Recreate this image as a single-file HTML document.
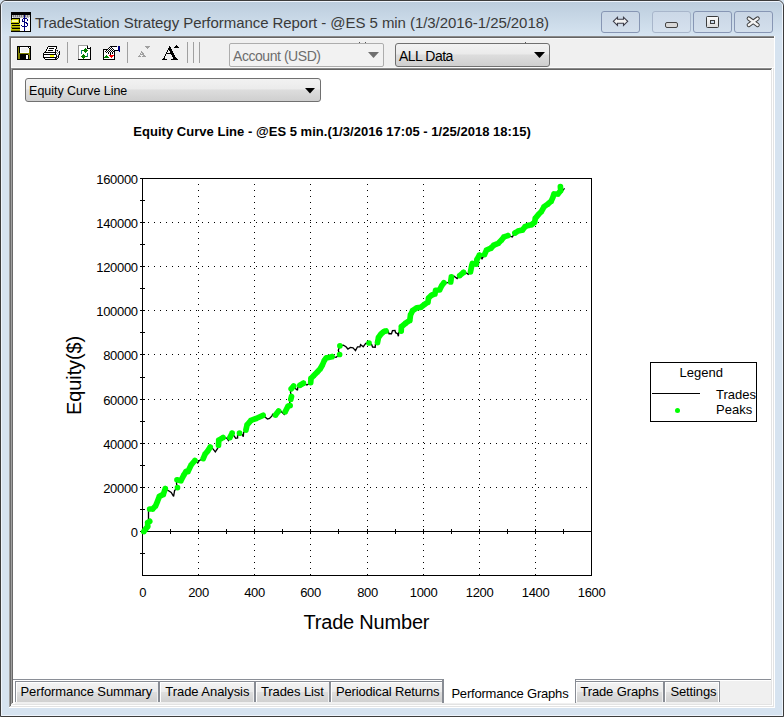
<!DOCTYPE html>
<html><head><meta charset="utf-8">
<style>
*{box-sizing:border-box}
html,body{margin:0;padding:0}
body{width:784px;height:717px;overflow:hidden;position:relative;background:#d6e3f0;font-family:"Liberation Sans",sans-serif}
.a{position:absolute}
.t{position:absolute;white-space:nowrap;line-height:1}
</style></head><body>
<!-- outer frame -->
<div class="a" style="left:0;top:0;width:784px;height:717px;border:1px solid #3c3c3c;border-radius:6px 6px 0 0"></div>
<div class="a" style="left:1px;top:1px;width:782px;height:715px;border:1px solid #eef4fc;border-radius:5px 5px 0 0"></div>
<div class="a" style="left:2px;top:2px;width:780px;height:34px;background:linear-gradient(#bccddd,#d6e4f1);border-radius:4px 4px 0 0"></div>
<!-- app icon -->
<svg class="a" style="left:11px;top:12px" width="20" height="20" shape-rendering="crispEdges"><path d="M0 0h20v1h-20zM0 1h20v1h-20zM0 2h20v1h-20zM0 3h1v1h-1zM19 3h1v1h-1zM0 4h1v1h-1zM19 4h1v1h-1zM0 5h1v1h-1zM19 5h1v1h-1zM0 6h9v1h-9zM19 6h1v1h-1zM0 7h1v1h-1zM8 7h1v1h-1zM19 7h1v1h-1zM8 8h1v1h-1zM19 8h1v1h-1zM8 9h1v1h-1zM19 9h1v1h-1zM8 10h1v1h-1zM19 10h1v1h-1zM0 11h8v1h-8zM19 11h1v1h-1zM19 12h1v1h-1zM1 13h8v1h-8zM19 13h1v1h-1zM19 14h1v1h-1zM19 15h1v1h-1zM1 16h8v1h-8zM19 16h1v1h-1zM19 17h1v1h-1zM19 18h1v1h-1zM0 19h20v1h-20z" fill="#000"/><path d="M1 3h1v1h-1zM3 3h1v1h-1zM5 3h1v1h-1zM7 3h1v1h-1zM9 3h1v1h-1zM11 3h1v1h-1zM15 3h1v1h-1zM17 3h2v1h-2zM1 4h1v1h-1zM3 4h1v1h-1zM5 4h1v1h-1zM7 4h1v1h-1zM9 4h1v1h-1zM11 4h1v1h-1zM15 4h1v1h-1zM17 4h2v1h-2zM2 5h11v1h-11zM14 5h4v1h-4z" fill="#c0c0c0"/><path d="M2 3h1v1h-1zM4 3h1v1h-1zM6 3h1v1h-1zM8 3h1v1h-1zM10 3h1v1h-1zM12 3h1v1h-1zM14 3h1v1h-1zM16 3h1v1h-1zM2 4h1v1h-1zM4 4h1v1h-1zM6 4h1v1h-1zM8 4h1v1h-1zM10 4h1v1h-1zM12 4h1v1h-1zM14 4h1v1h-1zM16 4h1v1h-1z" fill="#808080"/><path d="M13 3h1v1h-1zM13 4h1v1h-1zM13 5h1v1h-1zM12 6h4v1h-4zM11 7h1v1h-1zM13 7h1v1h-1zM16 7h1v1h-1zM11 8h1v1h-1zM13 8h1v1h-1zM16 8h1v1h-1zM11 9h3v1h-3zM13 10h3v1h-3zM13 11h1v1h-1zM15 11h2v1h-2zM13 12h1v1h-1zM16 12h1v1h-1zM10 13h1v1h-1zM13 13h1v1h-1zM16 13h1v1h-1zM11 14h5v1h-5zM13 15h1v1h-1zM13 16h1v1h-1zM13 17h1v1h-1zM13 18h1v1h-1z" fill="#000080"/><path d="M1 5h1v1h-1zM18 5h1v1h-1zM9 6h3v1h-3zM16 6h3v1h-3zM9 7h2v1h-2zM12 7h1v1h-1zM14 7h2v1h-2zM17 7h2v1h-2zM9 8h2v1h-2zM12 8h1v1h-1zM14 8h2v1h-2zM17 8h2v1h-2zM9 9h2v1h-2zM14 9h5v1h-5zM9 10h4v1h-4zM16 10h3v1h-3zM9 11h4v1h-4zM14 11h1v1h-1zM17 11h2v1h-2zM9 12h4v1h-4zM14 12h2v1h-2zM17 12h2v1h-2zM9 13h1v1h-1zM11 13h2v1h-2zM14 13h2v1h-2zM17 13h2v1h-2zM9 14h2v1h-2zM16 14h3v1h-3zM9 15h4v1h-4zM14 15h5v1h-5zM9 16h4v1h-4zM14 16h5v1h-5zM9 17h4v1h-4zM14 17h5v1h-5zM9 18h4v1h-4zM14 18h5v1h-5z" fill="#fff"/><path d="M1 7h7v1h-7zM0 8h1v1h-1zM7 8h1v1h-1zM0 9h1v1h-1zM7 9h1v1h-1zM0 10h8v1h-8zM8 11h1v1h-1zM0 12h9v1h-9zM0 13h1v1h-1zM0 14h9v1h-9zM0 16h1v1h-1zM0 17h9v1h-9z" fill="#c8c800"/><path d="M1 8h6v1h-6zM1 9h6v1h-6z" fill="#ffffa0"/><path d="M0 15h9v1h-9zM0 18h9v1h-9z" fill="#808000"/></svg>
<div class="t" style="left:35px;top:15px;font-size:15px;color:#3a3a3a;letter-spacing:-.06px">TradeStation Strategy Performance Report - @ES 5 min (1/3/2016-1/25/2018)</div>
<!-- caption buttons -->
<div class="a" style="left:601px;top:11px;width:39px;height:22px;border:1px solid #8796b4;border-radius:3px;background:linear-gradient(#c9d6e5,#d3dfec)"></div>
<div class="a" style="left:652px;top:11px;width:39px;height:22px;border:1px solid #a8b6cb;border-radius:3px;background:linear-gradient(#cbd8e7,#d5e1ee)"></div>
<div class="a" style="left:693px;top:11px;width:39px;height:22px;border:1px solid #8796b4;border-radius:3px;background:linear-gradient(#c9d6e5,#d3dfec)"></div>
<div class="a" style="left:734px;top:11px;width:39px;height:22px;border:1px solid #8796b4;border-radius:3px;background:linear-gradient(#c9d6e5,#d3dfec)"></div>
<svg class="a" style="left:608px;top:12px" width="26" height="18" viewBox="0 0 26 18"><path d="M5.3 9.3L9.5 5.2V7.3H15.5V5.2L19.7 9.3L15.5 13.4V11.3H9.5V13.4Z" fill="#f2f2f2" stroke="#3c3c48" stroke-width="1.1" stroke-linejoin="miter"/></svg>
<div class="a" style="left:665px;top:22px;width:13px;height:6px;border:1px solid #444;border-radius:2px;background:#d8d8d8"></div>
<div class="a" style="left:706px;top:16px;width:13px;height:12px;border:1.4px solid #3c3c3c;border-radius:1.5px;background:linear-gradient(#fafafa,#dcdcdc)"></div>
<div class="a" style="left:710px;top:19.7px;width:5px;height:4px;border:1.2px solid #3c3c3c;background:#c8d8e8"></div>
<svg class="a" style="left:745px;top:15px" width="17" height="14" viewBox="0 0 17 14"><path d="M3.8 3.6L12.6 10M12.6 3.6L3.8 10" stroke="#3c3c3c" stroke-width="4.3" stroke-linecap="round"/><path d="M3.8 3.6L12.6 10M12.6 3.6L3.8 10" stroke="#f4f4f4" stroke-width="2.4" stroke-linecap="round"/></svg>
<!-- inner frame -->
<div class="a" style="left:9px;top:36px;width:766px;height:672px;background:#f0f0f0"></div>
<div class="a" style="left:9px;top:36px;width:766px;height:1px;background:#8a8a8a"></div>
<div class="a" style="left:9px;top:37px;width:765px;height:1px;background:#646464"></div>
<div class="a" style="left:9px;top:36px;width:1px;height:671px;background:#a0a0a0"></div>
<div class="a" style="left:10px;top:37px;width:1px;height:669px;background:#6a6a6a"></div>
<div class="a" style="left:11px;top:38px;width:763px;height:1px;background:#fafafa"></div>
<div class="a" style="left:11px;top:38px;width:1px;height:30px;background:#fafafa"></div>
<div class="a" style="left:774px;top:36px;width:1px;height:672px;background:#fff"></div>
<!-- toolbar icons -->
<svg class="a" style="left:17px;top:46px" width="14" height="14" shape-rendering="crispEdges"><path d="M0 0h14v1h-14zM0 1h1v1h-1zM2 1h1v1h-1zM11 1h1v1h-1zM13 1h1v1h-1zM0 2h1v1h-1zM2 2h1v1h-1zM12 2h2v1h-2zM0 3h1v1h-1zM2 3h1v1h-1zM13 3h1v1h-1zM0 4h1v1h-1zM2 4h1v1h-1zM13 4h1v1h-1zM0 5h1v1h-1zM2 5h1v1h-1zM13 5h1v1h-1zM0 6h1v1h-1zM2 6h1v1h-1zM13 6h1v1h-1zM0 7h1v1h-1zM13 7h1v1h-1zM0 8h1v1h-1zM3 8h8v1h-8zM13 8h1v1h-1zM0 9h1v1h-1zM3 9h6v1h-6zM11 9h1v1h-1zM13 9h1v1h-1zM0 10h1v1h-1zM3 10h6v1h-6zM11 10h1v1h-1zM13 10h1v1h-1zM0 11h1v1h-1zM3 11h6v1h-6zM11 11h1v1h-1zM13 11h1v1h-1zM0 12h1v1h-1zM3 12h6v1h-6zM11 12h1v1h-1zM13 12h1v1h-1zM0 13h14v1h-14z" fill="#000"/><path d="M1 1h1v1h-1zM1 2h1v1h-1zM1 3h1v1h-1zM12 3h1v1h-1zM1 4h1v1h-1zM12 4h1v1h-1zM1 5h1v1h-1zM12 5h1v1h-1zM1 6h1v1h-1zM12 6h1v1h-1zM1 7h12v1h-12zM1 8h2v1h-2zM11 8h2v1h-2zM1 9h2v1h-2zM12 9h1v1h-1zM1 10h2v1h-2zM12 10h1v1h-1zM1 11h2v1h-2zM12 11h1v1h-1zM1 12h2v1h-2zM12 12h1v1h-1z" fill="#808000"/><path d="M3 1h8v1h-8zM12 1h1v1h-1zM3 2h1v1h-1zM11 2h1v1h-1zM3 3h1v1h-1zM11 3h1v1h-1zM3 4h1v1h-1zM11 4h1v1h-1zM3 5h1v1h-1zM11 5h1v1h-1zM3 6h9v1h-9zM9 9h2v1h-2zM9 10h2v1h-2zM9 11h2v1h-2zM9 12h2v1h-2z" fill="#fff"/><path d="M4 2h7v1h-7zM4 3h7v1h-7zM4 4h7v1h-7zM4 5h7v1h-7z" fill="#f0f0f0"/></svg>
<svg class="a" style="left:43px;top:46px" width="17" height="14" shape-rendering="crispEdges"><path d="M5 0h9v1h-9zM4 1h1v1h-1zM13 1h1v1h-1zM4 2h1v1h-1zM6 2h5v1h-5zM13 2h1v1h-1zM3 3h1v1h-1zM12 3h1v1h-1zM3 4h1v1h-1zM5 4h5v1h-5zM12 4h1v1h-1zM14 4h1v1h-1zM2 5h1v1h-1zM12 5h1v1h-1zM16 5h1v1h-1zM1 6h12v1h-12zM16 6h1v1h-1zM0 7h1v1h-1zM12 7h1v1h-1zM16 7h1v1h-1zM0 8h13v1h-13zM16 8h1v1h-1zM0 9h1v1h-1zM13 9h1v1h-1zM15 9h1v1h-1zM0 10h1v1h-1zM13 10h1v1h-1zM15 10h1v1h-1zM0 11h14v1h-14zM15 11h1v1h-1zM1 12h1v1h-1zM12 12h1v1h-1zM14 12h1v1h-1zM2 13h12v1h-12z" fill="#000"/><path d="M5 1h8v1h-8zM5 2h1v1h-1zM11 2h2v1h-2zM4 3h8v1h-8zM4 4h1v1h-1zM10 4h2v1h-2zM3 5h9v1h-9zM13 5h1v1h-1zM15 5h1v1h-1zM14 6h1v1h-1zM1 7h11v1h-11zM13 7h1v1h-1zM15 7h1v1h-1zM14 8h1v1h-1zM1 9h6v1h-6zM11 9h2v1h-2zM14 9h1v1h-1zM1 10h6v1h-6zM11 10h2v1h-2zM14 11h1v1h-1zM2 12h10v1h-10z" fill="#fff"/><path d="M13 4h1v1h-1zM14 5h1v1h-1zM13 6h1v1h-1zM15 6h1v1h-1zM14 7h1v1h-1zM13 8h1v1h-1zM15 8h1v1h-1zM14 10h1v1h-1zM13 12h1v1h-1z" fill="#808080"/><path d="M7 9h4v1h-4zM7 10h4v1h-4z" fill="#ffff00"/></svg>
<div class="a" style="left:67px;top:42px;width:1px;height:21px;background:#a0a0a0"></div>
<svg class="a" style="left:78px;top:45px" width="13" height="15" shape-rendering="crispEdges"><path d="M0 0h9v1h-9zM0 1h1v1h-1zM0 2h1v1h-1zM0 3h1v1h-1zM0 4h1v1h-1zM0 5h1v1h-1zM0 6h1v1h-1zM0 7h1v1h-1zM0 8h1v1h-1zM0 9h1v1h-1zM0 10h1v1h-1zM0 11h1v1h-1zM0 12h1v1h-1zM0 13h1v1h-1z" fill="#a0a0a0"/><path d="M9 0h1v1h-1z" fill="#808080"/><path d="M10 0h1v1h-1zM1 1h8v1h-8zM10 1h2v1h-2zM1 2h8v1h-8zM10 2h2v1h-2zM1 3h6v1h-6zM8 3h1v1h-1zM1 4h5v1h-5zM9 4h3v1h-3zM1 5h2v1h-2zM10 5h2v1h-2zM1 6h2v1h-2zM4 6h2v1h-2zM9 6h3v1h-3zM1 7h2v1h-2zM4 7h3v1h-3zM8 7h4v1h-4zM1 8h2v1h-2zM4 8h5v1h-5zM10 8h2v1h-2zM1 9h4v1h-4zM6 9h3v1h-3zM10 9h2v1h-2zM1 10h3v1h-3zM7 10h2v1h-2zM10 10h2v1h-2zM1 11h2v1h-2zM10 11h2v1h-2zM1 12h3v1h-3zM7 12h5v1h-5zM1 13h4v1h-4zM6 13h6v1h-6z" fill="#fff"/><path d="M9 1h1v1h-1zM9 2h1v1h-1zM12 2h1v1h-1zM9 3h4v1h-4zM12 4h1v1h-1zM12 5h1v1h-1zM12 6h1v1h-1zM12 7h1v1h-1zM12 8h1v1h-1zM12 9h1v1h-1zM12 10h1v1h-1zM12 11h1v1h-1zM12 12h1v1h-1zM12 13h1v1h-1zM0 14h13v1h-13z" fill="#000"/><path d="M7 3h1v1h-1zM6 4h3v1h-3zM4 5h6v1h-6zM6 6h3v1h-3zM7 7h1v1h-1zM5 9h1v1h-1zM4 10h3v1h-3zM3 11h6v1h-6zM4 12h3v1h-3zM5 13h1v1h-1z" fill="#008000"/><path d="M3 5h1v1h-1zM3 6h1v1h-1zM3 7h1v1h-1zM3 8h1v1h-1zM9 8h1v1h-1zM9 9h1v1h-1zM9 10h1v1h-1zM9 11h1v1h-1z" fill="#108080"/></svg>
<svg class="a" style="left:102px;top:45px" width="18" height="15" shape-rendering="crispEdges"><path d="M8 1h7v1h-7zM7 2h1v1h-1zM9 2h1v1h-1zM6 3h1v1h-1zM8 3h1v1h-1zM10 3h1v1h-1zM1 4h5v1h-5zM7 4h1v1h-1zM9 4h1v1h-1zM11 4h1v1h-1zM1 5h1v1h-1zM4 5h1v1h-1zM6 5h1v1h-1zM8 5h1v1h-1zM10 5h1v1h-1zM12 5h4v1h-4zM1 6h1v1h-1zM3 6h1v1h-1zM5 6h1v1h-1zM7 6h1v1h-1zM9 6h1v1h-1zM11 6h2v1h-2zM1 7h1v1h-1zM4 7h1v1h-1zM6 7h1v1h-1zM8 7h1v1h-1zM10 7h1v1h-1zM12 7h1v1h-1zM1 8h1v1h-1zM6 8h1v1h-1zM8 8h1v1h-1zM10 8h1v1h-1zM12 8h1v1h-1zM1 9h1v1h-1zM8 9h1v1h-1zM12 9h1v1h-1zM1 10h1v1h-1zM12 10h1v1h-1zM1 11h1v1h-1zM12 11h1v1h-1zM1 12h1v1h-1zM12 12h1v1h-1zM1 13h1v1h-1zM12 13h1v1h-1zM1 14h12v1h-12z" fill="#000"/><path d="M16 1h2v1h-2zM16 2h2v1h-2zM16 3h2v1h-2zM16 4h2v1h-2zM16 5h2v1h-2zM17 6h1v1h-1z" fill="#000080"/><path d="M8 2h1v1h-1zM10 2h6v1h-6zM7 3h1v1h-1zM9 3h1v1h-1zM11 3h5v1h-5zM6 4h1v1h-1zM8 4h1v1h-1zM10 4h1v1h-1zM12 4h4v1h-4zM2 5h2v1h-2zM5 5h1v1h-1zM7 5h1v1h-1zM9 5h1v1h-1zM11 5h1v1h-1zM2 6h1v1h-1zM4 6h1v1h-1zM6 6h1v1h-1zM8 6h1v1h-1zM10 6h1v1h-1zM2 7h2v1h-2zM5 7h1v1h-1zM7 7h1v1h-1zM9 7h1v1h-1zM11 7h1v1h-1zM2 8h4v1h-4zM7 8h1v1h-1zM9 8h1v1h-1zM11 8h1v1h-1zM2 9h6v1h-6zM9 9h3v1h-3zM2 10h2v1h-2zM5 10h2v1h-2zM2 11h1v1h-1zM6 11h2v1h-2zM11 11h1v1h-1zM7 12h2v1h-2zM10 12h2v1h-2zM2 13h10v1h-10z" fill="#fff"/><path d="M4 10h1v1h-1zM3 11h3v1h-3zM2 12h5v1h-5z" fill="#008000"/><path d="M7 10h5v1h-5zM8 11h3v1h-3zM9 12h1v1h-1z" fill="#ff0000"/></svg>
<div class="a" style="left:127px;top:42px;width:1px;height:21px;background:#a0a0a0"></div>
<svg class="a" style="left:138px;top:46px" width="12" height="11" shape-rendering="crispEdges"><path d="M7 0h5v1h-5zM8 1h3v1h-3zM9 2h1v1h-1zM3 5h1v1h-1zM3 6h2v1h-2zM2 7h1v1h-1zM4 7h2v1h-2zM2 8h4v1h-4zM1 9h1v1h-1zM5 9h2v1h-2zM0 10h3v1h-3zM4 10h4v1h-4z" fill="#a0a0a0"/></svg>
<svg class="a" style="left:162px;top:45px" width="18" height="15" shape-rendering="crispEdges"><path d="M14 0h1v1h-1zM7 1h1v1h-1zM13 1h3v1h-3zM7 2h2v1h-2zM12 2h5v1h-5zM6 3h3v1h-3zM6 4h4v1h-4zM5 5h1v1h-1zM7 5h3v1h-3zM5 6h1v1h-1zM8 6h3v1h-3zM4 7h1v1h-1zM8 7h3v1h-3zM4 8h8v1h-8zM3 9h1v1h-1zM9 9h3v1h-3zM3 10h1v1h-1zM10 10h3v1h-3zM2 11h1v1h-1zM10 11h3v1h-3zM2 12h1v1h-1zM11 12h3v1h-3zM1 13h2v1h-2zM11 13h4v1h-4zM0 14h5v1h-5zM9 14h7v1h-7z" fill="#000"/></svg>
<div class="a" style="left:187px;top:42px;width:1px;height:21px;background:#a0a0a0"></div>
<div class="a" style="left:193px;top:42px;width:1px;height:21px;background:#a0a0a0"></div>
<div class="a" style="left:199px;top:42px;width:1px;height:21px;background:#a0a0a0"></div>
<!-- account dropdown -->
<div class="a" style="left:359px;top:42px;width:1px;height:1px;background:#555"></div>
<div class="a" style="left:365px;top:42px;width:1px;height:1px;background:#555"></div>
<div class="a" style="left:525px;top:42px;width:1px;height:1px;background:#555"></div>
<div class="a" style="left:229px;top:43px;width:155px;height:24px;border:1px solid #adadad;border-radius:2px;background:#f2f2f2"></div>
<div class="t" style="left:233px;top:48.5px;font-size:14px;color:#6d6d6d;letter-spacing:-.45px">Account (USD)</div>
<svg class="a" style="left:368px;top:52px" width="11" height="6"><path d="M0 0h11l-5.5 6z" fill="#707070"/></svg>
<div class="a" style="left:395px;top:43px;width:155px;height:24px;border:1px solid #707070;border-radius:3px;background:linear-gradient(#f2f2f2 0,#ebebeb 45%,#dddddd 50%,#cfcfcf 100%)"></div>
<div class="t" style="left:399px;top:48.5px;font-size:14px;color:#000;letter-spacing:-.5px">ALL Data</div>
<svg class="a" style="left:534px;top:52px" width="11" height="6"><path d="M0 0h11l-5.5 6z" fill="#000"/></svg>
<!-- content area -->
<div class="a" style="left:11px;top:67px;width:763px;height:1px;background:#fafafa"></div>
<div class="a" style="left:11px;top:68px;width:761px;height:1px;background:#8a8a8a"></div>
<div class="a" style="left:12px;top:69px;width:759px;height:1px;background:#646464"></div>
<div class="a" style="left:11px;top:68px;width:1px;height:636px;background:#a0a0a0"></div>
<div class="a" style="left:12px;top:69px;width:1px;height:634px;background:#696969"></div>
<div class="a" style="left:13px;top:70px;width:758px;height:609px;background:#fff"></div>
<div class="a" style="left:771px;top:69px;width:1px;height:636px;background:#e3e3e3"></div>
<div class="a" style="left:772px;top:68px;width:1px;height:638px;background:#fff"></div>
<div class="a" style="left:773px;top:68px;width:1px;height:639px;background:#e3e3e3"></div>
<!-- equity dropdown -->
<div class="a" style="left:25px;top:78px;width:296px;height:24px;border:1px solid #707070;border-radius:3px;background:linear-gradient(#f2f2f2 0,#ebebeb 45%,#dddddd 50%,#cfcfcf 100%)"></div>
<div class="t" style="left:29.1px;top:85px;font-size:12.45px;color:#000">Equity Curve Line</div>
<svg class="a" style="left:305px;top:88px" width="11" height="6"><path d="M0 0h10l-5 5.5z" fill="#000"/></svg>
<!-- chart title -->
<div class="t" style="left:133.3px;top:125.3px;font-size:13px;font-weight:bold;letter-spacing:.03px;color:#000">Equity Curve Line - @ES 5 min.(1/3/2016 17:05 - 1/25/2018 18:15)</div>
<!-- axis titles -->
<div class="t" style="left:303.5px;top:612px;font-size:20px;color:#000;letter-spacing:-.2px">Trade Number</div>
<div class="t" style="left:64px;top:415px;font-size:20px;color:#000;letter-spacing:-.1px;transform:rotate(-90deg);transform-origin:0 0">Equity($)</div>
<svg width="784" height="717" style="position:absolute;left:0;top:0" shape-rendering="crispEdges">
<path d="M148 222h1v1h-1zM154 222h1v1h-1zM160 222h1v1h-1zM166 222h1v1h-1zM172 222h1v1h-1zM178 222h1v1h-1zM184 222h1v1h-1zM190 222h1v1h-1zM196 222h1v1h-1zM202 222h1v1h-1zM208 222h1v1h-1zM214 222h1v1h-1zM220 222h1v1h-1zM226 222h1v1h-1zM232 222h1v1h-1zM238 222h1v1h-1zM244 222h1v1h-1zM250 222h1v1h-1zM256 222h1v1h-1zM262 222h1v1h-1zM268 222h1v1h-1zM274 222h1v1h-1zM280 222h1v1h-1zM286 222h1v1h-1zM292 222h1v1h-1zM298 222h1v1h-1zM304 222h1v1h-1zM310 222h1v1h-1zM316 222h1v1h-1zM322 222h1v1h-1zM328 222h1v1h-1zM334 222h1v1h-1zM340 222h1v1h-1zM346 222h1v1h-1zM352 222h1v1h-1zM358 222h1v1h-1zM364 222h1v1h-1zM370 222h1v1h-1zM376 222h1v1h-1zM382 222h1v1h-1zM388 222h1v1h-1zM394 222h1v1h-1zM400 222h1v1h-1zM406 222h1v1h-1zM412 222h1v1h-1zM418 222h1v1h-1zM424 222h1v1h-1zM430 222h1v1h-1zM436 222h1v1h-1zM442 222h1v1h-1zM448 222h1v1h-1zM454 222h1v1h-1zM460 222h1v1h-1zM466 222h1v1h-1zM472 222h1v1h-1zM478 222h1v1h-1zM484 222h1v1h-1zM490 222h1v1h-1zM496 222h1v1h-1zM502 222h1v1h-1zM508 222h1v1h-1zM514 222h1v1h-1zM520 222h1v1h-1zM526 222h1v1h-1zM532 222h1v1h-1zM538 222h1v1h-1zM544 222h1v1h-1zM550 222h1v1h-1zM556 222h1v1h-1zM562 222h1v1h-1zM568 222h1v1h-1zM574 222h1v1h-1zM580 222h1v1h-1zM586 222h1v1h-1zM148 266h1v1h-1zM154 266h1v1h-1zM160 266h1v1h-1zM166 266h1v1h-1zM172 266h1v1h-1zM178 266h1v1h-1zM184 266h1v1h-1zM190 266h1v1h-1zM196 266h1v1h-1zM202 266h1v1h-1zM208 266h1v1h-1zM214 266h1v1h-1zM220 266h1v1h-1zM226 266h1v1h-1zM232 266h1v1h-1zM238 266h1v1h-1zM244 266h1v1h-1zM250 266h1v1h-1zM256 266h1v1h-1zM262 266h1v1h-1zM268 266h1v1h-1zM274 266h1v1h-1zM280 266h1v1h-1zM286 266h1v1h-1zM292 266h1v1h-1zM298 266h1v1h-1zM304 266h1v1h-1zM310 266h1v1h-1zM316 266h1v1h-1zM322 266h1v1h-1zM328 266h1v1h-1zM334 266h1v1h-1zM340 266h1v1h-1zM346 266h1v1h-1zM352 266h1v1h-1zM358 266h1v1h-1zM364 266h1v1h-1zM370 266h1v1h-1zM376 266h1v1h-1zM382 266h1v1h-1zM388 266h1v1h-1zM394 266h1v1h-1zM400 266h1v1h-1zM406 266h1v1h-1zM412 266h1v1h-1zM418 266h1v1h-1zM424 266h1v1h-1zM430 266h1v1h-1zM436 266h1v1h-1zM442 266h1v1h-1zM448 266h1v1h-1zM454 266h1v1h-1zM460 266h1v1h-1zM466 266h1v1h-1zM472 266h1v1h-1zM478 266h1v1h-1zM484 266h1v1h-1zM490 266h1v1h-1zM496 266h1v1h-1zM502 266h1v1h-1zM508 266h1v1h-1zM514 266h1v1h-1zM520 266h1v1h-1zM526 266h1v1h-1zM532 266h1v1h-1zM538 266h1v1h-1zM544 266h1v1h-1zM550 266h1v1h-1zM556 266h1v1h-1zM562 266h1v1h-1zM568 266h1v1h-1zM574 266h1v1h-1zM580 266h1v1h-1zM586 266h1v1h-1zM148 310h1v1h-1zM154 310h1v1h-1zM160 310h1v1h-1zM166 310h1v1h-1zM172 310h1v1h-1zM178 310h1v1h-1zM184 310h1v1h-1zM190 310h1v1h-1zM196 310h1v1h-1zM202 310h1v1h-1zM208 310h1v1h-1zM214 310h1v1h-1zM220 310h1v1h-1zM226 310h1v1h-1zM232 310h1v1h-1zM238 310h1v1h-1zM244 310h1v1h-1zM250 310h1v1h-1zM256 310h1v1h-1zM262 310h1v1h-1zM268 310h1v1h-1zM274 310h1v1h-1zM280 310h1v1h-1zM286 310h1v1h-1zM292 310h1v1h-1zM298 310h1v1h-1zM304 310h1v1h-1zM310 310h1v1h-1zM316 310h1v1h-1zM322 310h1v1h-1zM328 310h1v1h-1zM334 310h1v1h-1zM340 310h1v1h-1zM346 310h1v1h-1zM352 310h1v1h-1zM358 310h1v1h-1zM364 310h1v1h-1zM370 310h1v1h-1zM376 310h1v1h-1zM382 310h1v1h-1zM388 310h1v1h-1zM394 310h1v1h-1zM400 310h1v1h-1zM406 310h1v1h-1zM412 310h1v1h-1zM418 310h1v1h-1zM424 310h1v1h-1zM430 310h1v1h-1zM436 310h1v1h-1zM442 310h1v1h-1zM448 310h1v1h-1zM454 310h1v1h-1zM460 310h1v1h-1zM466 310h1v1h-1zM472 310h1v1h-1zM478 310h1v1h-1zM484 310h1v1h-1zM490 310h1v1h-1zM496 310h1v1h-1zM502 310h1v1h-1zM508 310h1v1h-1zM514 310h1v1h-1zM520 310h1v1h-1zM526 310h1v1h-1zM532 310h1v1h-1zM538 310h1v1h-1zM544 310h1v1h-1zM550 310h1v1h-1zM556 310h1v1h-1zM562 310h1v1h-1zM568 310h1v1h-1zM574 310h1v1h-1zM580 310h1v1h-1zM586 310h1v1h-1zM148 354h1v1h-1zM154 354h1v1h-1zM160 354h1v1h-1zM166 354h1v1h-1zM172 354h1v1h-1zM178 354h1v1h-1zM184 354h1v1h-1zM190 354h1v1h-1zM196 354h1v1h-1zM202 354h1v1h-1zM208 354h1v1h-1zM214 354h1v1h-1zM220 354h1v1h-1zM226 354h1v1h-1zM232 354h1v1h-1zM238 354h1v1h-1zM244 354h1v1h-1zM250 354h1v1h-1zM256 354h1v1h-1zM262 354h1v1h-1zM268 354h1v1h-1zM274 354h1v1h-1zM280 354h1v1h-1zM286 354h1v1h-1zM292 354h1v1h-1zM298 354h1v1h-1zM304 354h1v1h-1zM310 354h1v1h-1zM316 354h1v1h-1zM322 354h1v1h-1zM328 354h1v1h-1zM334 354h1v1h-1zM340 354h1v1h-1zM346 354h1v1h-1zM352 354h1v1h-1zM358 354h1v1h-1zM364 354h1v1h-1zM370 354h1v1h-1zM376 354h1v1h-1zM382 354h1v1h-1zM388 354h1v1h-1zM394 354h1v1h-1zM400 354h1v1h-1zM406 354h1v1h-1zM412 354h1v1h-1zM418 354h1v1h-1zM424 354h1v1h-1zM430 354h1v1h-1zM436 354h1v1h-1zM442 354h1v1h-1zM448 354h1v1h-1zM454 354h1v1h-1zM460 354h1v1h-1zM466 354h1v1h-1zM472 354h1v1h-1zM478 354h1v1h-1zM484 354h1v1h-1zM490 354h1v1h-1zM496 354h1v1h-1zM502 354h1v1h-1zM508 354h1v1h-1zM514 354h1v1h-1zM520 354h1v1h-1zM526 354h1v1h-1zM532 354h1v1h-1zM538 354h1v1h-1zM544 354h1v1h-1zM550 354h1v1h-1zM556 354h1v1h-1zM562 354h1v1h-1zM568 354h1v1h-1zM574 354h1v1h-1zM580 354h1v1h-1zM586 354h1v1h-1zM148 399h1v1h-1zM154 399h1v1h-1zM160 399h1v1h-1zM166 399h1v1h-1zM172 399h1v1h-1zM178 399h1v1h-1zM184 399h1v1h-1zM190 399h1v1h-1zM196 399h1v1h-1zM202 399h1v1h-1zM208 399h1v1h-1zM214 399h1v1h-1zM220 399h1v1h-1zM226 399h1v1h-1zM232 399h1v1h-1zM238 399h1v1h-1zM244 399h1v1h-1zM250 399h1v1h-1zM256 399h1v1h-1zM262 399h1v1h-1zM268 399h1v1h-1zM274 399h1v1h-1zM280 399h1v1h-1zM286 399h1v1h-1zM292 399h1v1h-1zM298 399h1v1h-1zM304 399h1v1h-1zM310 399h1v1h-1zM316 399h1v1h-1zM322 399h1v1h-1zM328 399h1v1h-1zM334 399h1v1h-1zM340 399h1v1h-1zM346 399h1v1h-1zM352 399h1v1h-1zM358 399h1v1h-1zM364 399h1v1h-1zM370 399h1v1h-1zM376 399h1v1h-1zM382 399h1v1h-1zM388 399h1v1h-1zM394 399h1v1h-1zM400 399h1v1h-1zM406 399h1v1h-1zM412 399h1v1h-1zM418 399h1v1h-1zM424 399h1v1h-1zM430 399h1v1h-1zM436 399h1v1h-1zM442 399h1v1h-1zM448 399h1v1h-1zM454 399h1v1h-1zM460 399h1v1h-1zM466 399h1v1h-1zM472 399h1v1h-1zM478 399h1v1h-1zM484 399h1v1h-1zM490 399h1v1h-1zM496 399h1v1h-1zM502 399h1v1h-1zM508 399h1v1h-1zM514 399h1v1h-1zM520 399h1v1h-1zM526 399h1v1h-1zM532 399h1v1h-1zM538 399h1v1h-1zM544 399h1v1h-1zM550 399h1v1h-1zM556 399h1v1h-1zM562 399h1v1h-1zM568 399h1v1h-1zM574 399h1v1h-1zM580 399h1v1h-1zM586 399h1v1h-1zM148 443h1v1h-1zM154 443h1v1h-1zM160 443h1v1h-1zM166 443h1v1h-1zM172 443h1v1h-1zM178 443h1v1h-1zM184 443h1v1h-1zM190 443h1v1h-1zM196 443h1v1h-1zM202 443h1v1h-1zM208 443h1v1h-1zM214 443h1v1h-1zM220 443h1v1h-1zM226 443h1v1h-1zM232 443h1v1h-1zM238 443h1v1h-1zM244 443h1v1h-1zM250 443h1v1h-1zM256 443h1v1h-1zM262 443h1v1h-1zM268 443h1v1h-1zM274 443h1v1h-1zM280 443h1v1h-1zM286 443h1v1h-1zM292 443h1v1h-1zM298 443h1v1h-1zM304 443h1v1h-1zM310 443h1v1h-1zM316 443h1v1h-1zM322 443h1v1h-1zM328 443h1v1h-1zM334 443h1v1h-1zM340 443h1v1h-1zM346 443h1v1h-1zM352 443h1v1h-1zM358 443h1v1h-1zM364 443h1v1h-1zM370 443h1v1h-1zM376 443h1v1h-1zM382 443h1v1h-1zM388 443h1v1h-1zM394 443h1v1h-1zM400 443h1v1h-1zM406 443h1v1h-1zM412 443h1v1h-1zM418 443h1v1h-1zM424 443h1v1h-1zM430 443h1v1h-1zM436 443h1v1h-1zM442 443h1v1h-1zM448 443h1v1h-1zM454 443h1v1h-1zM460 443h1v1h-1zM466 443h1v1h-1zM472 443h1v1h-1zM478 443h1v1h-1zM484 443h1v1h-1zM490 443h1v1h-1zM496 443h1v1h-1zM502 443h1v1h-1zM508 443h1v1h-1zM514 443h1v1h-1zM520 443h1v1h-1zM526 443h1v1h-1zM532 443h1v1h-1zM538 443h1v1h-1zM544 443h1v1h-1zM550 443h1v1h-1zM556 443h1v1h-1zM562 443h1v1h-1zM568 443h1v1h-1zM574 443h1v1h-1zM580 443h1v1h-1zM586 443h1v1h-1zM148 487h1v1h-1zM154 487h1v1h-1zM160 487h1v1h-1zM166 487h1v1h-1zM172 487h1v1h-1zM178 487h1v1h-1zM184 487h1v1h-1zM190 487h1v1h-1zM196 487h1v1h-1zM202 487h1v1h-1zM208 487h1v1h-1zM214 487h1v1h-1zM220 487h1v1h-1zM226 487h1v1h-1zM232 487h1v1h-1zM238 487h1v1h-1zM244 487h1v1h-1zM250 487h1v1h-1zM256 487h1v1h-1zM262 487h1v1h-1zM268 487h1v1h-1zM274 487h1v1h-1zM280 487h1v1h-1zM286 487h1v1h-1zM292 487h1v1h-1zM298 487h1v1h-1zM304 487h1v1h-1zM310 487h1v1h-1zM316 487h1v1h-1zM322 487h1v1h-1zM328 487h1v1h-1zM334 487h1v1h-1zM340 487h1v1h-1zM346 487h1v1h-1zM352 487h1v1h-1zM358 487h1v1h-1zM364 487h1v1h-1zM370 487h1v1h-1zM376 487h1v1h-1zM382 487h1v1h-1zM388 487h1v1h-1zM394 487h1v1h-1zM400 487h1v1h-1zM406 487h1v1h-1zM412 487h1v1h-1zM418 487h1v1h-1zM424 487h1v1h-1zM430 487h1v1h-1zM436 487h1v1h-1zM442 487h1v1h-1zM448 487h1v1h-1zM454 487h1v1h-1zM460 487h1v1h-1zM466 487h1v1h-1zM472 487h1v1h-1zM478 487h1v1h-1zM484 487h1v1h-1zM490 487h1v1h-1zM496 487h1v1h-1zM502 487h1v1h-1zM508 487h1v1h-1zM514 487h1v1h-1zM520 487h1v1h-1zM526 487h1v1h-1zM532 487h1v1h-1zM538 487h1v1h-1zM544 487h1v1h-1zM550 487h1v1h-1zM556 487h1v1h-1zM562 487h1v1h-1zM568 487h1v1h-1zM574 487h1v1h-1zM580 487h1v1h-1zM586 487h1v1h-1zM198 184h1v1h-1zM198 190h1v1h-1zM198 196h1v1h-1zM198 202h1v1h-1zM198 208h1v1h-1zM198 214h1v1h-1zM198 220h1v1h-1zM198 226h1v1h-1zM198 232h1v1h-1zM198 238h1v1h-1zM198 244h1v1h-1zM198 250h1v1h-1zM198 256h1v1h-1zM198 262h1v1h-1zM198 268h1v1h-1zM198 274h1v1h-1zM198 280h1v1h-1zM198 286h1v1h-1zM198 292h1v1h-1zM198 298h1v1h-1zM198 304h1v1h-1zM198 310h1v1h-1zM198 316h1v1h-1zM198 322h1v1h-1zM198 328h1v1h-1zM198 334h1v1h-1zM198 340h1v1h-1zM198 346h1v1h-1zM198 352h1v1h-1zM198 358h1v1h-1zM198 364h1v1h-1zM198 370h1v1h-1zM198 376h1v1h-1zM198 382h1v1h-1zM198 388h1v1h-1zM198 394h1v1h-1zM198 400h1v1h-1zM198 406h1v1h-1zM198 412h1v1h-1zM198 418h1v1h-1zM198 424h1v1h-1zM198 430h1v1h-1zM198 436h1v1h-1zM198 442h1v1h-1zM198 448h1v1h-1zM198 454h1v1h-1zM198 460h1v1h-1zM198 466h1v1h-1zM198 472h1v1h-1zM198 478h1v1h-1zM198 484h1v1h-1zM198 490h1v1h-1zM198 496h1v1h-1zM198 502h1v1h-1zM198 508h1v1h-1zM198 514h1v1h-1zM198 520h1v1h-1zM198 526h1v1h-1zM198 532h1v1h-1zM198 538h1v1h-1zM198 544h1v1h-1zM198 550h1v1h-1zM198 556h1v1h-1zM198 562h1v1h-1zM198 568h1v1h-1zM198 574h1v1h-1zM254 184h1v1h-1zM254 190h1v1h-1zM254 196h1v1h-1zM254 202h1v1h-1zM254 208h1v1h-1zM254 214h1v1h-1zM254 220h1v1h-1zM254 226h1v1h-1zM254 232h1v1h-1zM254 238h1v1h-1zM254 244h1v1h-1zM254 250h1v1h-1zM254 256h1v1h-1zM254 262h1v1h-1zM254 268h1v1h-1zM254 274h1v1h-1zM254 280h1v1h-1zM254 286h1v1h-1zM254 292h1v1h-1zM254 298h1v1h-1zM254 304h1v1h-1zM254 310h1v1h-1zM254 316h1v1h-1zM254 322h1v1h-1zM254 328h1v1h-1zM254 334h1v1h-1zM254 340h1v1h-1zM254 346h1v1h-1zM254 352h1v1h-1zM254 358h1v1h-1zM254 364h1v1h-1zM254 370h1v1h-1zM254 376h1v1h-1zM254 382h1v1h-1zM254 388h1v1h-1zM254 394h1v1h-1zM254 400h1v1h-1zM254 406h1v1h-1zM254 412h1v1h-1zM254 418h1v1h-1zM254 424h1v1h-1zM254 430h1v1h-1zM254 436h1v1h-1zM254 442h1v1h-1zM254 448h1v1h-1zM254 454h1v1h-1zM254 460h1v1h-1zM254 466h1v1h-1zM254 472h1v1h-1zM254 478h1v1h-1zM254 484h1v1h-1zM254 490h1v1h-1zM254 496h1v1h-1zM254 502h1v1h-1zM254 508h1v1h-1zM254 514h1v1h-1zM254 520h1v1h-1zM254 526h1v1h-1zM254 532h1v1h-1zM254 538h1v1h-1zM254 544h1v1h-1zM254 550h1v1h-1zM254 556h1v1h-1zM254 562h1v1h-1zM254 568h1v1h-1zM254 574h1v1h-1zM310 184h1v1h-1zM310 190h1v1h-1zM310 196h1v1h-1zM310 202h1v1h-1zM310 208h1v1h-1zM310 214h1v1h-1zM310 220h1v1h-1zM310 226h1v1h-1zM310 232h1v1h-1zM310 238h1v1h-1zM310 244h1v1h-1zM310 250h1v1h-1zM310 256h1v1h-1zM310 262h1v1h-1zM310 268h1v1h-1zM310 274h1v1h-1zM310 280h1v1h-1zM310 286h1v1h-1zM310 292h1v1h-1zM310 298h1v1h-1zM310 304h1v1h-1zM310 310h1v1h-1zM310 316h1v1h-1zM310 322h1v1h-1zM310 328h1v1h-1zM310 334h1v1h-1zM310 340h1v1h-1zM310 346h1v1h-1zM310 352h1v1h-1zM310 358h1v1h-1zM310 364h1v1h-1zM310 370h1v1h-1zM310 376h1v1h-1zM310 382h1v1h-1zM310 388h1v1h-1zM310 394h1v1h-1zM310 400h1v1h-1zM310 406h1v1h-1zM310 412h1v1h-1zM310 418h1v1h-1zM310 424h1v1h-1zM310 430h1v1h-1zM310 436h1v1h-1zM310 442h1v1h-1zM310 448h1v1h-1zM310 454h1v1h-1zM310 460h1v1h-1zM310 466h1v1h-1zM310 472h1v1h-1zM310 478h1v1h-1zM310 484h1v1h-1zM310 490h1v1h-1zM310 496h1v1h-1zM310 502h1v1h-1zM310 508h1v1h-1zM310 514h1v1h-1zM310 520h1v1h-1zM310 526h1v1h-1zM310 532h1v1h-1zM310 538h1v1h-1zM310 544h1v1h-1zM310 550h1v1h-1zM310 556h1v1h-1zM310 562h1v1h-1zM310 568h1v1h-1zM310 574h1v1h-1zM367 184h1v1h-1zM367 190h1v1h-1zM367 196h1v1h-1zM367 202h1v1h-1zM367 208h1v1h-1zM367 214h1v1h-1zM367 220h1v1h-1zM367 226h1v1h-1zM367 232h1v1h-1zM367 238h1v1h-1zM367 244h1v1h-1zM367 250h1v1h-1zM367 256h1v1h-1zM367 262h1v1h-1zM367 268h1v1h-1zM367 274h1v1h-1zM367 280h1v1h-1zM367 286h1v1h-1zM367 292h1v1h-1zM367 298h1v1h-1zM367 304h1v1h-1zM367 310h1v1h-1zM367 316h1v1h-1zM367 322h1v1h-1zM367 328h1v1h-1zM367 334h1v1h-1zM367 340h1v1h-1zM367 346h1v1h-1zM367 352h1v1h-1zM367 358h1v1h-1zM367 364h1v1h-1zM367 370h1v1h-1zM367 376h1v1h-1zM367 382h1v1h-1zM367 388h1v1h-1zM367 394h1v1h-1zM367 400h1v1h-1zM367 406h1v1h-1zM367 412h1v1h-1zM367 418h1v1h-1zM367 424h1v1h-1zM367 430h1v1h-1zM367 436h1v1h-1zM367 442h1v1h-1zM367 448h1v1h-1zM367 454h1v1h-1zM367 460h1v1h-1zM367 466h1v1h-1zM367 472h1v1h-1zM367 478h1v1h-1zM367 484h1v1h-1zM367 490h1v1h-1zM367 496h1v1h-1zM367 502h1v1h-1zM367 508h1v1h-1zM367 514h1v1h-1zM367 520h1v1h-1zM367 526h1v1h-1zM367 532h1v1h-1zM367 538h1v1h-1zM367 544h1v1h-1zM367 550h1v1h-1zM367 556h1v1h-1zM367 562h1v1h-1zM367 568h1v1h-1zM367 574h1v1h-1zM423 184h1v1h-1zM423 190h1v1h-1zM423 196h1v1h-1zM423 202h1v1h-1zM423 208h1v1h-1zM423 214h1v1h-1zM423 220h1v1h-1zM423 226h1v1h-1zM423 232h1v1h-1zM423 238h1v1h-1zM423 244h1v1h-1zM423 250h1v1h-1zM423 256h1v1h-1zM423 262h1v1h-1zM423 268h1v1h-1zM423 274h1v1h-1zM423 280h1v1h-1zM423 286h1v1h-1zM423 292h1v1h-1zM423 298h1v1h-1zM423 304h1v1h-1zM423 310h1v1h-1zM423 316h1v1h-1zM423 322h1v1h-1zM423 328h1v1h-1zM423 334h1v1h-1zM423 340h1v1h-1zM423 346h1v1h-1zM423 352h1v1h-1zM423 358h1v1h-1zM423 364h1v1h-1zM423 370h1v1h-1zM423 376h1v1h-1zM423 382h1v1h-1zM423 388h1v1h-1zM423 394h1v1h-1zM423 400h1v1h-1zM423 406h1v1h-1zM423 412h1v1h-1zM423 418h1v1h-1zM423 424h1v1h-1zM423 430h1v1h-1zM423 436h1v1h-1zM423 442h1v1h-1zM423 448h1v1h-1zM423 454h1v1h-1zM423 460h1v1h-1zM423 466h1v1h-1zM423 472h1v1h-1zM423 478h1v1h-1zM423 484h1v1h-1zM423 490h1v1h-1zM423 496h1v1h-1zM423 502h1v1h-1zM423 508h1v1h-1zM423 514h1v1h-1zM423 520h1v1h-1zM423 526h1v1h-1zM423 532h1v1h-1zM423 538h1v1h-1zM423 544h1v1h-1zM423 550h1v1h-1zM423 556h1v1h-1zM423 562h1v1h-1zM423 568h1v1h-1zM423 574h1v1h-1zM479 184h1v1h-1zM479 190h1v1h-1zM479 196h1v1h-1zM479 202h1v1h-1zM479 208h1v1h-1zM479 214h1v1h-1zM479 220h1v1h-1zM479 226h1v1h-1zM479 232h1v1h-1zM479 238h1v1h-1zM479 244h1v1h-1zM479 250h1v1h-1zM479 256h1v1h-1zM479 262h1v1h-1zM479 268h1v1h-1zM479 274h1v1h-1zM479 280h1v1h-1zM479 286h1v1h-1zM479 292h1v1h-1zM479 298h1v1h-1zM479 304h1v1h-1zM479 310h1v1h-1zM479 316h1v1h-1zM479 322h1v1h-1zM479 328h1v1h-1zM479 334h1v1h-1zM479 340h1v1h-1zM479 346h1v1h-1zM479 352h1v1h-1zM479 358h1v1h-1zM479 364h1v1h-1zM479 370h1v1h-1zM479 376h1v1h-1zM479 382h1v1h-1zM479 388h1v1h-1zM479 394h1v1h-1zM479 400h1v1h-1zM479 406h1v1h-1zM479 412h1v1h-1zM479 418h1v1h-1zM479 424h1v1h-1zM479 430h1v1h-1zM479 436h1v1h-1zM479 442h1v1h-1zM479 448h1v1h-1zM479 454h1v1h-1zM479 460h1v1h-1zM479 466h1v1h-1zM479 472h1v1h-1zM479 478h1v1h-1zM479 484h1v1h-1zM479 490h1v1h-1zM479 496h1v1h-1zM479 502h1v1h-1zM479 508h1v1h-1zM479 514h1v1h-1zM479 520h1v1h-1zM479 526h1v1h-1zM479 532h1v1h-1zM479 538h1v1h-1zM479 544h1v1h-1zM479 550h1v1h-1zM479 556h1v1h-1zM479 562h1v1h-1zM479 568h1v1h-1zM479 574h1v1h-1zM535 184h1v1h-1zM535 190h1v1h-1zM535 196h1v1h-1zM535 202h1v1h-1zM535 208h1v1h-1zM535 214h1v1h-1zM535 220h1v1h-1zM535 226h1v1h-1zM535 232h1v1h-1zM535 238h1v1h-1zM535 244h1v1h-1zM535 250h1v1h-1zM535 256h1v1h-1zM535 262h1v1h-1zM535 268h1v1h-1zM535 274h1v1h-1zM535 280h1v1h-1zM535 286h1v1h-1zM535 292h1v1h-1zM535 298h1v1h-1zM535 304h1v1h-1zM535 310h1v1h-1zM535 316h1v1h-1zM535 322h1v1h-1zM535 328h1v1h-1zM535 334h1v1h-1zM535 340h1v1h-1zM535 346h1v1h-1zM535 352h1v1h-1zM535 358h1v1h-1zM535 364h1v1h-1zM535 370h1v1h-1zM535 376h1v1h-1zM535 382h1v1h-1zM535 388h1v1h-1zM535 394h1v1h-1zM535 400h1v1h-1zM535 406h1v1h-1zM535 412h1v1h-1zM535 418h1v1h-1zM535 424h1v1h-1zM535 430h1v1h-1zM535 436h1v1h-1zM535 442h1v1h-1zM535 448h1v1h-1zM535 454h1v1h-1zM535 460h1v1h-1zM535 466h1v1h-1zM535 472h1v1h-1zM535 478h1v1h-1zM535 484h1v1h-1zM535 490h1v1h-1zM535 496h1v1h-1zM535 502h1v1h-1zM535 508h1v1h-1zM535 514h1v1h-1zM535 520h1v1h-1zM535 526h1v1h-1zM535 532h1v1h-1zM535 538h1v1h-1zM535 544h1v1h-1zM535 550h1v1h-1zM535 556h1v1h-1zM535 562h1v1h-1zM535 568h1v1h-1zM535 574h1v1h-1z" fill="#000"/>
<path d="M142 178h450v1h-450zM142 178h1v398h-1zM591 178h1v398h-1zM142 575h450v1h-450zM142 531h450v1h-450z" fill="#000"/>
<path d="M140 178h5v1h-5zM140 200h5v1h-5zM140 222h5v1h-5zM140 244h5v1h-5zM140 266h5v1h-5zM140 288h5v1h-5zM140 310h5v1h-5zM140 332h5v1h-5zM140 354h5v1h-5zM140 377h5v1h-5zM140 399h5v1h-5zM140 421h5v1h-5zM140 443h5v1h-5zM140 465h5v1h-5zM140 487h5v1h-5zM140 509h5v1h-5zM140 531h5v1h-5zM140 553h5v1h-5zM170 529h1v5h-1zM198 529h1v5h-1zM226 529h1v5h-1zM254 529h1v5h-1zM282 529h1v5h-1zM310 529h1v5h-1zM338 529h1v5h-1zM367 529h1v5h-1zM395 529h1v5h-1zM423 529h1v5h-1zM451 529h1v5h-1zM479 529h1v5h-1zM507 529h1v5h-1zM535 529h1v5h-1zM563 529h1v5h-1z" fill="#000"/>
<g font-family="Liberation Sans" font-size="13" letter-spacing="-0.3" fill="#000"><text x="137.8" y="183.9" text-anchor="end">160000</text><text x="137.8" y="227.9" text-anchor="end">140000</text><text x="137.8" y="271.9" text-anchor="end">120000</text><text x="137.8" y="315.9" text-anchor="end">100000</text><text x="137.8" y="359.9" text-anchor="end">80000</text><text x="137.8" y="404.9" text-anchor="end">60000</text><text x="137.8" y="448.9" text-anchor="end">40000</text><text x="137.8" y="492.9" text-anchor="end">20000</text><text x="137.8" y="536.9" text-anchor="end">0</text><text x="142.6" y="597" text-anchor="middle">0</text><text x="198.6" y="597" text-anchor="middle">200</text><text x="254.6" y="597" text-anchor="middle">400</text><text x="310.6" y="597" text-anchor="middle">600</text><text x="367.6" y="597" text-anchor="middle">800</text><text x="423.6" y="597" text-anchor="middle">1000</text><text x="479.6" y="597" text-anchor="middle">1200</text><text x="535.6" y="597" text-anchor="middle">1400</text><text x="591.6" y="597" text-anchor="middle">1600</text></g>
<g shape-rendering="auto"><path d="M143.8 531.5 L146.0 528.5 L147.7 526.6 L147.7 522.7 L149.7 521.3 L148.5 521.0 L148.5 510.0 L149.7 509.0 L152.6 509.0 L155.5 506.1 L157.5 501.3 L159.4 496.4 L163.3 494.4 L165.3 488.6 L168.2 490.5 L171.2 492.5 L173.6 496.4 L174.6 490.5 L177.5 487.6 L176.5 483.7 L177.0 479.8 L180.9 480.7 L183.9 474.9 L186.0 471.5 L188.0 471.5 L191.1 465.0 L194.9 460.5 L197.8 463.0 L199.4 460.5 L203.2 458.6 L205.1 454.1 L207.7 451.0 L210.2 447.1 L212.8 448.7 L215.3 451.9 L217.6 448.4 L218.5 445.2 L218.8 440.1 L223.0 437.6 L226.8 438.2 L228.4 440.4 L229.9 437.6 L232.1 433.2 L234.4 436.4 L235.7 438.3 L237.6 437.9 L237.6 435.1 L239.5 433.2 L242.3 434.8 L243.3 436.7 L243.6 432.5 L245.9 430.0 L247.1 424.9 L251.0 420.4 L256.1 418.5 L263.1 415.3 L265.6 417.5 L267.5 419.1 L269.5 418.5 L272.0 416.0 L272.6 414.3 L275.5 415.0 L278.6 411.1 L281.1 411.5 L284.2 414.3 L285.2 411.8 L288.0 406.3 L290.1 405.6 L289.4 403.5 L290.8 399.3 L291.5 396.5 L290.5 392.3 L291.2 388.8 L293.6 386.0 L295.7 388.8 L297.5 390.2 L297.8 387.4 L299.9 385.3 L303.4 383.2 L306.9 385.0 L310.7 382.6 L311.0 378.4 L313.8 375.6 L317.3 372.0 L320.1 369.0 L322.4 365.0 L324.3 360.5 L326.2 358.0 L332.0 356.7 L336.1 357.3 L339.6 354.5 L338.3 350.3 L339.9 345.8 L343.4 345.2 L346.0 346.8 L347.9 349.0 L350.4 347.4 L353.0 347.8 L355.5 350.6 L357.5 346.8 L360.0 346.8 L360.6 344.6 L363.2 346.8 L365.7 343.3 L369.0 343.0 L371.6 344.4 L372.6 347.0 L375.2 347.2 L375.4 344.4 L377.5 342.5 L378.5 337.5 L381.0 334.0 L384.0 331.5 L386.0 331.0 L388.2 331.1 L389.0 333.7 L391.5 333.7 L392.5 330.6 L395.0 330.4 L395.6 332.7 L397.6 333.7 L398.4 336.2 L398.7 332.7 L401.2 331.1 L401.4 326.7 L405.6 323.2 L409.8 320.4 L410.5 314.9 L412.6 310.7 L416.7 307.9 L420.9 307.2 L424.4 304.4 L427.9 302.3 L428.6 298.1 L431.4 295.3 L434.9 293.9 L435.6 290.5 L439.7 289.8 L441.8 285.6 L443.9 282.8 L446.7 282.8 L450.7 282.0 L451.4 276.9 L454.2 276.3 L457.1 278.5 L459.7 275.6 L463.5 272.4 L466.7 273.1 L468.3 274.3 L470.5 271.8 L471.8 265.4 L472.4 263.5 L476.3 264.1 L476.9 259.7 L479.4 255.2 L482.0 258.7 L484.5 254.6 L486.5 250.1 L490.9 248.2 L491.3 247.7 L493.8 245.2 L498.3 243.3 L501.5 240.1 L504.0 236.9 L507.9 235.6 L512.3 236.9 L514.9 233.0 L518.1 231.1 L522.5 229.9 L525.1 226.7 L528.3 225.4 L531.5 224.8 L534.6 222.2 L535.3 218.4 L538.4 214.6 L541.2 211.8 L544.0 206.8 L547.9 204.0 L551.2 201.2 L552.9 197.3 L554.0 194.0 L557.9 194.0 L560.7 190.6 L560.4 186.7 L563.0 190.1 L564.6 188.4" fill="none" stroke="#000" stroke-width="1.35" stroke-linejoin="miter" stroke-miterlimit="2"/>
<path d="M143.8 531.5L146.0 528.5M146.0 528.5L147.7 526.6M147.7 526.6L147.7 522.7M147.7 522.7L149.7 521.3M149.7 509.0L152.6 509.0M152.6 509.0L155.5 506.1M155.5 506.1L157.5 501.3M157.5 501.3L159.4 496.4M159.4 496.4L163.3 494.4M163.3 494.4L165.3 488.6M177.0 479.8L180.9 480.7M180.9 480.7L183.9 474.9M183.9 474.9L186.0 471.5M186.0 471.5L188.0 471.5M188.0 471.5L191.1 465.0M191.1 465.0L194.9 460.5M203.2 458.6L205.1 454.1M205.1 454.1L207.7 451.0M207.7 451.0L210.2 447.1M218.5 445.2L218.8 440.1M218.8 440.1L223.0 437.6M229.9 437.6L232.1 433.2M245.9 430.0L247.1 424.9M247.1 424.9L251.0 420.4M251.0 420.4L256.1 418.5M256.1 418.5L263.1 415.3M275.5 415.0L278.6 411.1M285.2 411.8L288.0 406.3M288.0 406.3L290.1 405.6M290.8 399.3L291.5 396.5M291.2 388.8L293.6 386.0M299.9 385.3L303.4 383.2M310.7 382.6L311.0 378.4M311.0 378.4L313.8 375.6M313.8 375.6L317.3 372.0M317.3 372.0L320.1 369.0M320.1 369.0L322.4 365.0M322.4 365.0L324.3 360.5M324.3 360.5L326.2 358.0M326.2 358.0L332.0 356.7M377.5 342.5L378.5 337.5M378.5 337.5L381.0 334.0M381.0 334.0L384.0 331.5M384.0 331.5L386.0 331.0M401.2 331.1L401.4 326.7M401.4 326.7L405.6 323.2M405.6 323.2L409.8 320.4M409.8 320.4L410.5 314.9M410.5 314.9L412.6 310.7M412.6 310.7L416.7 307.9M416.7 307.9L420.9 307.2M420.9 307.2L424.4 304.4M424.4 304.4L427.9 302.3M427.9 302.3L428.6 298.1M428.6 298.1L431.4 295.3M431.4 295.3L434.9 293.9M434.9 293.9L435.6 290.5M435.6 290.5L439.7 289.8M439.7 289.8L441.8 285.6M441.8 285.6L443.9 282.8M450.7 282.0L451.4 276.9M459.7 275.6L463.5 272.4M470.5 271.8L471.8 265.4M471.8 265.4L472.4 263.5M472.4 263.5L476.3 264.1M476.3 264.1L476.9 259.7M476.9 259.7L479.4 255.2M484.5 254.6L486.5 250.1M486.5 250.1L490.9 248.2M490.9 248.2L491.3 247.7M491.3 247.7L493.8 245.2M493.8 245.2L498.3 243.3M498.3 243.3L501.5 240.1M501.5 240.1L504.0 236.9M504.0 236.9L507.9 235.6M514.9 233.0L518.1 231.1M518.1 231.1L522.5 229.9M522.5 229.9L525.1 226.7M525.1 226.7L528.3 225.4M528.3 225.4L531.5 224.8M531.5 224.8L534.6 222.2M534.6 222.2L535.3 218.4M535.3 218.4L538.4 214.6M538.4 214.6L541.2 211.8M541.2 211.8L544.0 206.8M544.0 206.8L547.9 204.0M547.9 204.0L551.2 201.2M551.2 201.2L552.9 197.3M552.9 197.3L554.0 194.0M554.0 194.0L557.9 194.0M557.9 194.0L560.7 190.6M560.7 190.6L560.4 186.7M143.8 531.5h0M146.0 528.5h0M147.7 526.6h0M147.7 522.7h0M149.7 521.3h0M149.7 509.0h0M152.6 509.0h0M155.5 506.1h0M157.5 501.3h0M159.4 496.4h0M163.3 494.4h0M165.3 488.6h0M177.5 487.6h0M177.0 479.8h0M180.9 480.7h0M183.9 474.9h0M186.0 471.5h0M188.0 471.5h0M191.1 465.0h0M194.9 460.5h0M203.2 458.6h0M205.1 454.1h0M207.7 451.0h0M210.2 447.1h0M218.5 445.2h0M218.8 440.1h0M223.0 437.6h0M229.9 437.6h0M232.1 433.2h0M239.5 433.2h0M245.9 430.0h0M247.1 424.9h0M251.0 420.4h0M256.1 418.5h0M263.1 415.3h0M275.5 415.0h0M278.6 411.1h0M285.2 411.8h0M288.0 406.3h0M290.1 405.6h0M290.8 399.3h0M291.5 396.5h0M291.2 388.8h0M293.6 386.0h0M299.9 385.3h0M303.4 383.2h0M310.7 382.6h0M311.0 378.4h0M313.8 375.6h0M317.3 372.0h0M320.1 369.0h0M322.4 365.0h0M324.3 360.5h0M326.2 358.0h0M332.0 356.7h0M339.6 354.5h0M339.9 345.8h0M369.0 343.0h0M377.5 342.5h0M378.5 337.5h0M381.0 334.0h0M384.0 331.5h0M386.0 331.0h0M401.2 331.1h0M401.4 326.7h0M405.6 323.2h0M409.8 320.4h0M410.5 314.9h0M412.6 310.7h0M416.7 307.9h0M420.9 307.2h0M424.4 304.4h0M427.9 302.3h0M428.6 298.1h0M431.4 295.3h0M434.9 293.9h0M435.6 290.5h0M439.7 289.8h0M441.8 285.6h0M443.9 282.8h0M450.7 282.0h0M451.4 276.9h0M459.7 275.6h0M463.5 272.4h0M470.5 271.8h0M471.8 265.4h0M472.4 263.5h0M476.3 264.1h0M476.9 259.7h0M479.4 255.2h0M484.5 254.6h0M486.5 250.1h0M490.9 248.2h0M491.3 247.7h0M493.8 245.2h0M498.3 243.3h0M501.5 240.1h0M504.0 236.9h0M507.9 235.6h0M514.9 233.0h0M518.1 231.1h0M522.5 229.9h0M525.1 226.7h0M528.3 225.4h0M531.5 224.8h0M534.6 222.2h0M535.3 218.4h0M538.4 214.6h0M541.2 211.8h0M544.0 206.8h0M547.9 204.0h0M551.2 201.2h0M552.9 197.3h0M554.0 194.0h0M557.9 194.0h0M560.7 190.6h0M560.4 186.7h0" fill="none" stroke="#00ff00" stroke-width="5.7" stroke-linecap="round" stroke-linejoin="round"/></g>
</svg>
<!-- legend -->
<div class="a" style="left:650px;top:362px;width:107px;height:60px;border:1px solid #000;background:#fff"></div>
<div class="t" style="left:679.5px;top:366px;font-size:13px;color:#000">Legend</div>
<div class="a" style="left:652px;top:393px;width:48px;height:1px;background:#000"></div>
<div class="t" style="left:716px;top:387.5px;font-size:13px;color:#000">Trades</div>
<div class="a" style="left:674.6px;top:408px;width:5.4px;height:5.4px;border-radius:50%;background:#00ff00"></div>
<div class="t" style="left:716px;top:403px;font-size:13px;color:#000">Peaks</div>
<!-- tab strip -->
<div class="a" style="left:13px;top:679px;width:758px;height:1px;background:#8a8e96"></div>
<div class="a" style="left:13px;top:680px;width:758px;height:1px;background:#fff"></div>
<div class="a" style="left:13px;top:681px;width:2px;height:23px;background:#fff"></div>
<div class="a" style="left:13px;top:704px;width:758px;height:1px;background:#e3e3e3"></div>
<div class="a" style="left:11px;top:705px;width:762px;height:1px;background:#fff"></div>
<div class="a" style="left:10px;top:706px;width:764px;height:1px;background:#e3e3e3"></div>
<div class="a" style="left:9px;top:707px;width:766px;height:1px;background:#fff"></div>
<div class="a" style="left:15px;top:681px;width:427px;height:1px;background:#888c94"></div>
<div class="a" style="left:576px;top:681px;width:144px;height:1px;background:#888c94"></div>
<div class="a" style="left:16px;top:682px;width:426px;height:1px;background:#fff"></div>
<div class="a" style="left:576px;top:682px;width:143px;height:1px;background:#fff"></div>
<div class="a" style="left:15px;top:681px;width:1px;height:21px;background:#888c94"></div>
<div class="a" style="left:16px;top:682px;width:1px;height:20px;background:#fff"></div>
<div class="a" style="left:17px;top:683px;width:140px;height:19px;background:linear-gradient(#f3f3f3 0,#ebebeb 45%,#dedede 50%,#d0d0d0 100%)"></div>
<div class="t" style="left:20.5px;top:685px;font-size:13px;color:#000;letter-spacing:-0.1px">Performance Summary</div>
<div class="a" style="left:158px;top:681px;width:2px;height:21px;background:#888c94"></div>
<div class="a" style="left:160px;top:682px;width:1px;height:20px;background:#fff"></div>
<div class="a" style="left:161px;top:683px;width:92px;height:19px;background:linear-gradient(#f3f3f3 0,#ebebeb 45%,#dedede 50%,#d0d0d0 100%)"></div>
<div class="t" style="left:165.3px;top:685px;font-size:13px;color:#000;letter-spacing:-0.05px">Trade Analysis</div>
<div class="a" style="left:254px;top:681px;width:2px;height:21px;background:#888c94"></div>
<div class="a" style="left:256px;top:682px;width:1px;height:20px;background:#fff"></div>
<div class="a" style="left:257px;top:683px;width:71px;height:19px;background:linear-gradient(#f3f3f3 0,#ebebeb 45%,#dedede 50%,#d0d0d0 100%)"></div>
<div class="t" style="left:261px;top:685px;font-size:13px;color:#000;letter-spacing:-0.1px">Trades List</div>
<div class="a" style="left:329px;top:681px;width:2px;height:21px;background:#888c94"></div>
<div class="a" style="left:331px;top:682px;width:1px;height:20px;background:#fff"></div>
<div class="a" style="left:332px;top:683px;width:110px;height:19px;background:linear-gradient(#f3f3f3 0,#ebebeb 45%,#dedede 50%,#d0d0d0 100%)"></div>
<div class="t" style="left:336px;top:685px;font-size:13px;color:#000;letter-spacing:-0.16px">Periodical Returns</div>
<div class="a" style="left:575px;top:681px;width:1px;height:21px;background:#888c94"></div>
<div class="a" style="left:576px;top:682px;width:1px;height:20px;background:#fff"></div>
<div class="a" style="left:577px;top:683px;width:85px;height:19px;background:linear-gradient(#f3f3f3 0,#ebebeb 45%,#dedede 50%,#d0d0d0 100%)"></div>
<div class="t" style="left:580.4px;top:685px;font-size:13px;color:#000;letter-spacing:-0.13px">Trade Graphs</div>
<div class="a" style="left:663px;top:681px;width:2px;height:21px;background:#888c94"></div>
<div class="a" style="left:665px;top:682px;width:1px;height:20px;background:#fff"></div>
<div class="a" style="left:666px;top:683px;width:52px;height:19px;background:linear-gradient(#f3f3f3 0,#ebebeb 45%,#dedede 50%,#d0d0d0 100%)"></div>
<div class="t" style="left:670.4px;top:685px;font-size:13px;color:#000;letter-spacing:-0.12px">Settings</div>
<div class="a" style="left:719px;top:681px;width:1px;height:21px;background:#888c94"></div>
<div class="a" style="left:718px;top:682px;width:1px;height:20px;background:#fff"></div>
<div class="a" style="left:442px;top:679px;width:2px;height:24px;background:#888c94"></div>
<div class="a" style="left:575px;top:679px;width:1px;height:24px;background:#888c94"></div>
<div class="a" style="left:444px;top:679px;width:131px;height:24px;background:#fff"></div>
<div class="t" style="left:451.4px;top:686.6px;font-size:13px;color:#000;letter-spacing:-.2px">Performance Graphs</div>
</body></html>
